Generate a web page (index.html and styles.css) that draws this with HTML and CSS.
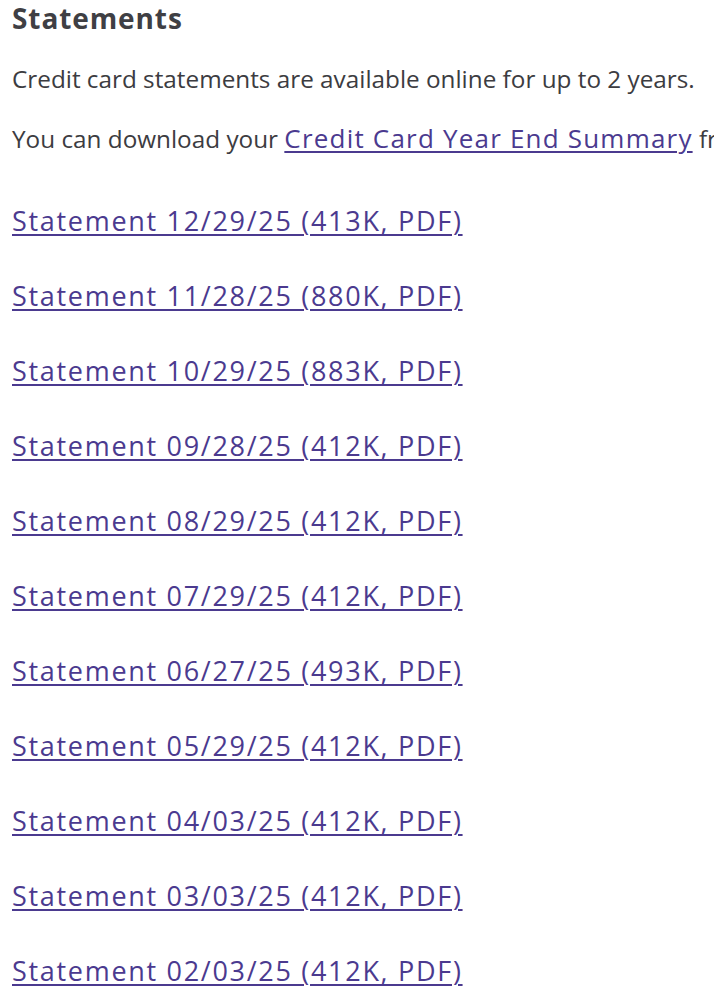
FILE: index.html
```html
<!DOCTYPE html>
<html lang="en">
<head>
<meta charset="utf-8">
<title>Statements</title>
<link rel="stylesheet" href="styles.css">
</head>
<body>
<main class="page">
  <h2 class="title">Statements</h2>
  <p class="intro">Credit card statements are available online for up to 2 years.</p>
  <p class="intro second">You can download your <a class="inline-link" href="#">Credit Card Year End Summary</a> from the Documents page.</p>
  <ul class="statements">
    <li><a class="stmt" href="#">Statement 12/29/25 (413K, PDF)</a></li>
    <li><a class="stmt" href="#">Statement 11/28/25 (880K, PDF)</a></li>
    <li><a class="stmt" href="#">Statement 10/29/25 (883K, PDF)</a></li>
    <li><a class="stmt" href="#">Statement 09/28/25 (412K, PDF)</a></li>
    <li><a class="stmt" href="#">Statement 08/29/25 (412K, PDF)</a></li>
    <li><a class="stmt" href="#">Statement 07/29/25 (412K, PDF)</a></li>
    <li><a class="stmt" href="#">Statement 06/27/25 (493K, PDF)</a></li>
    <li><a class="stmt" href="#">Statement 05/29/25 (412K, PDF)</a></li>
    <li><a class="stmt" href="#">Statement 04/03/25 (412K, PDF)</a></li>
    <li><a class="stmt" href="#">Statement 03/03/25 (412K, PDF)</a></li>
    <li><a class="stmt" href="#">Statement 02/03/25 (412K, PDF)</a></li>
  </ul>
</main>
</body>
</html>
```
FILE: styles.css
```css
html, body {
  margin: 0;
  padding: 0;
  background: #ffffff;
  overflow: hidden;
}
.page {
  padding: 0 12px;
  font-family: "Open Sans", "Noto Sans", sans-serif;
  color: #3c3c41;
  white-space: nowrap;
  overflow: hidden;
}
.title {
  margin: 0;
  font-size: 28px;
  line-height: 36px;
  font-weight: 700;
  letter-spacing: 0.9px;
  color: #3f3f44;
}
.intro {
  margin: 27px 0 0;
  font-size: 24.3px;
  line-height: 32px;
}
.intro.second {
  margin-top: 28px;
}
.inline-link {
  color: #4b3a8f;
  font-size: 26px;
  line-height: 1;
  letter-spacing: 1.2px;
  text-decoration: underline;
  text-decoration-thickness: 2px;
  text-underline-offset: 3px;
}
.statements {
  list-style: none;
  margin: 48px 0 0;
  padding: 0;
  display: flex;
  flex-direction: column;
  gap: 39px;
}
.statements li {
  height: 36px;
}
.stmt {
  font-size: 27px;
  line-height: 36px;
  letter-spacing: 1.7px;
  color: #4b3a8f;
  text-decoration: underline;
  text-decoration-thickness: 2px;
  text-underline-offset: 3px;
}
```
